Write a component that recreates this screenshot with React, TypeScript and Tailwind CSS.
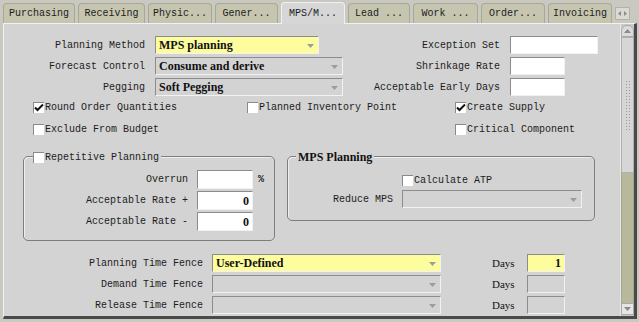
import React from 'react';

const mono = "font-['Liberation_Mono',monospace] text-[10px] text-[#1c1c1c] whitespace-nowrap";
const serifBold = "font-['Liberation_Serif',serif] font-bold text-[12px] text-[#111]";

type Tone = 'white' | 'yellow' | 'disabled';

const toneClass: Record<Tone, string> = {
  white: 'bg-white',
  yellow: 'bg-[#fdfd9e]',
  disabled: 'bg-[#d3d3d3]',
};

const Arrow = () => (
  <svg className="absolute right-[4px] top-[7px]" width="7" height="4" viewBox="0 0 7 4">
    <path d="M0 0h7L3.5 4z" fill="#9c9c9c" />
  </svg>
);

const Field = ({
  w,
  h = 'h-[18px]',
  tone = 'white',
  value,
  dropdown,
  right,
}: {
  w: string;
  h?: string;
  tone?: Tone;
  value?: string;
  dropdown?: boolean;
  right?: boolean;
}) => (
  <div
    className={`relative flex items-center shrink-0 border border-[#8c8c8c] border-b-[#f2f2f2] border-r-[#f2f2f2] ${w} ${h} ${toneClass[tone]} ${
      right ? 'justify-end pr-[3px]' : 'pl-[3px]'
    }`}
  >
    {value && <span className={`${serifBold} leading-none`}>{value}</span>}
    {dropdown && <Arrow />}
  </div>
);

const Check = ({ checked }: { checked?: boolean }) => (
  <span className="relative inline-block h-[11px] w-[11px] shrink-0 bg-white border-t border-l border-[#8a8a8a]">
    {checked && (
      <svg className="absolute left-[0px] top-[0px]" width="10" height="10" viewBox="0 0 10 10">
        <path d="M1 4.5l2.5 2.5L9 1.5" stroke="#111" strokeWidth="2" fill="none" />
      </svg>
    )}
  </span>
);

const CheckItem = ({ label, checked, w }: { label: string; checked?: boolean; w?: string }) => (
  <div className={`flex items-center shrink-0 ${w ?? ''}`}>
    <Check checked={checked} />
    <span className={`${mono} ml-[1px]`}>{label}</span>
  </div>
);

const tabs: { label: string; w: string; active?: boolean }[] = [
  { label: 'Purchasing', w: 'w-[72px]' },
  { label: 'Receiving', w: 'w-[67px]' },
  { label: 'Physic...', w: 'w-[64px]' },
  { label: 'Gener...', w: 'w-[63px]' },
  { label: 'MPS/M...', w: 'w-[64px]', active: true },
  { label: 'Lead ...', w: 'w-[62px]' },
  { label: 'Work ...', w: 'w-[65px]' },
  { label: 'Order...', w: 'w-[64px]' },
  { label: 'Invoicing', w: 'w-[64px]' },
];

const Label = ({ children, w }: { children: React.ReactNode; w: string }) => (
  <span className={`${mono} ${w} shrink-0 text-right`}>{children}</span>
);

const Scrollbar = () => (
  <div className="flex w-[14px] shrink-0 flex-col border-l border-[#e8e8e8] bg-[#c9c9c9] py-[1px]">
    <div className="flex h-[12px] items-center justify-center rounded-t-[6px] border border-[#a9a9a9] bg-[#dcdcdc]">
      <svg width="7" height="4" viewBox="0 0 7 4">
        <path d="M0 4h7L3.5 0z" fill="#8a8a8a" />
      </svg>
    </div>
    <div className="flex h-[136px] items-center justify-center border border-[#b0b0b0] bg-[#d6d6d6]">
      <div className="h-[50px] w-[6px] bg-[radial-gradient(#9a9a9a_0.6px,transparent_0.8px)] bg-[length:3px_3px]" />
    </div>
    <div className="flex-1 bg-[#b8b89c] border-x border-[#a6a68a]" />
    <div className="flex h-[12px] items-center justify-center border border-[#a9a9a9] bg-[#e6e6e6]">
      <svg width="7" height="4" viewBox="0 0 7 4">
        <path d="M0 0h7L3.5 4z" fill="#8a8a8a" />
      </svg>
    </div>
  </div>
);

export default function App() {
  return (
    <div className="h-[322px] w-[639px] overflow-hidden bg-[#c9c9c1]">
      {/* Tabs */}
      <div className="flex h-[23px] items-end gap-[3px] pl-[3px]">
        {tabs.map((t) => (
          <div
            key={t.label}
            className={`flex items-center justify-center rounded-t-[4px] border border-b-0 ${t.w} ${
              t.active
                ? 'relative z-10 -mb-[1px] h-[22px] border-[#f0f0f0] bg-[#d6d6d6]'
                : 'h-[20px] border-[#a8a894] bg-[#c6c6b0]'
            }`}
          >
            <span className={mono}>{t.label}</span>
          </div>
        ))}
        <div className="mb-[3px] ml-[0px] flex h-[13px] w-[15px] items-center justify-center border border-[#b4b4a4] bg-[#dadad2]">
          <svg width="9" height="5" viewBox="0 0 9 5">
            <path d="M0 2.5L3 0v5zM9 2.5L6 0v5z" fill="#8c8c8c" />
          </svg>
        </div>
      </div>

      {/* Panel */}
      <div className="ml-[3px] flex h-[296px] w-[634px] border-t border-l border-[#f2f2f2] border-r-[3px] border-r-[#4a4a4a] border-b-[3px] border-b-[#4a4a4a] bg-[#d3d3d3]">
        <div className="flex-1 pt-[12px]">
          {/* Top fields */}
          <div className="flex h-[18px] items-center">
            <Label w="w-[141px]">Planning Method</Label>
            <div className="ml-[10px]">
              <Field w="w-[164px]" tone="yellow" value="MPS planning" dropdown />
            </div>
            <Label w="w-[181px]">Exception Set</Label>
            <div className="ml-[10px]">
              <Field w="w-[88px]" />
            </div>
          </div>
          <div className="mt-[3px] flex h-[18px] items-center">
            <Label w="w-[141px]">Forecast Control</Label>
            <div className="ml-[10px]">
              <Field w="w-[188px]" tone="disabled" value="Consume and derive" dropdown />
            </div>
            <Label w="w-[157px]">Shrinkage Rate</Label>
            <div className="ml-[10px]">
              <Field w="w-[55px]" />
            </div>
          </div>
          <div className="mt-[3px] flex h-[18px] items-center">
            <Label w="w-[141px]">Pegging</Label>
            <div className="ml-[10px]">
              <Field w="w-[188px]" tone="disabled" value="Soft Pegging" dropdown />
            </div>
            <Label w="w-[157px]">Acceptable Early Days</Label>
            <div className="ml-[10px]">
              <Field w="w-[55px]" />
            </div>
          </div>

          {/* Checkboxes */}
          <div className="mt-[4px] flex h-[14px] items-center pl-[29px]">
            <CheckItem w="w-[214px]" label="Round Order Quantities" checked />
            <CheckItem w="w-[208px]" label="Planned Inventory Point" />
            <CheckItem label="Create Supply" checked />
          </div>
          <div className="mt-[8px] flex h-[14px] items-center pl-[29px]">
            <CheckItem w="w-[422px]" label="Exclude From Budget" />
            <CheckItem label="Critical Component" />
          </div>

          {/* Groups */}
          <div className="mt-[20px] flex items-start pl-[19px]">
            <div className="relative h-[85px] w-[252px] rounded-[5px] border border-[#7e7e7e] shadow-[inset_1px_1px_0_#eeeeee]">
              <div className="absolute -top-[7px] left-[9px] flex items-center bg-[#d3d3d3] pr-[2px]">
                <CheckItem label="Repetitive Planning" />
              </div>
              <div className="flex flex-col gap-[2px] pt-[13px]">
                <div className="flex h-[19px] items-center">
                  <Label w="w-[164px]">Overrun</Label>
                  <div className="ml-[9px]">
                    <Field w="w-[56px]" h="h-[19px]" />
                  </div>
                  <span className={`${mono} ml-[5px] font-bold`}>%</span>
                </div>
                <div className="flex h-[19px] items-center">
                  <Label w="w-[164px]">Acceptable Rate +</Label>
                  <div className="ml-[9px]">
                    <Field w="w-[56px]" h="h-[19px]" value="0" right />
                  </div>
                </div>
                <div className="flex h-[19px] items-center">
                  <Label w="w-[164px]">Acceptable Rate -</Label>
                  <div className="ml-[9px]">
                    <Field w="w-[56px]" h="h-[19px]" value="0" right />
                  </div>
                </div>
              </div>
            </div>

            <div className="relative ml-[12px] h-[65px] w-[308px] rounded-[5px] border border-[#7e7e7e] shadow-[inset_1px_1px_0_#eeeeee]">
              <div className="absolute -top-[7px] left-[8px] flex h-[14px] items-center bg-[#d3d3d3] px-[2px]">
                <span className={`${serifBold} text-[11.5px] leading-none`}>MPS Planning</span>
              </div>
              <div className="flex h-[14px] items-center pl-[114px] mt-[16px]">
                <CheckItem label="Calculate ATP" />
              </div>
              <div className="mt-[3px] flex h-[18px] items-center">
                <Label w="w-[105px]">Reduce MPS</Label>
                <div className="ml-[9px]">
                  <Field w="w-[180px]" tone="disabled" dropdown />
                </div>
              </div>
            </div>
          </div>

          {/* Time fences */}
          <div className="mt-[13px] flex flex-col gap-[3px]">
            {[
              { label: 'Planning Time Fence', value: 'User-Defined', tone: 'yellow' as Tone, days: '1' },
              { label: 'Demand Time Fence', tone: 'disabled' as Tone },
              { label: 'Release Time Fence', tone: 'disabled' as Tone },
            ].map((r) => (
              <div key={r.label} className="flex h-[18px] items-center">
                <Label w="w-[199px]">{r.label}</Label>
                <div className="ml-[9px]">
                  <Field w="w-[229px]" tone={r.tone} value={r.value} dropdown />
                </div>
                <span className="ml-[51px] w-[24px] font-['Liberation_Serif',serif] text-[11px] text-[#111]">Days</span>
                <div className="ml-[11px]">
                  <Field w="w-[38px]" tone={r.tone} value={r.days} right />
                </div>
              </div>
            ))}
          </div>
        </div>
        <Scrollbar />
      </div>
    </div>
  );
}
